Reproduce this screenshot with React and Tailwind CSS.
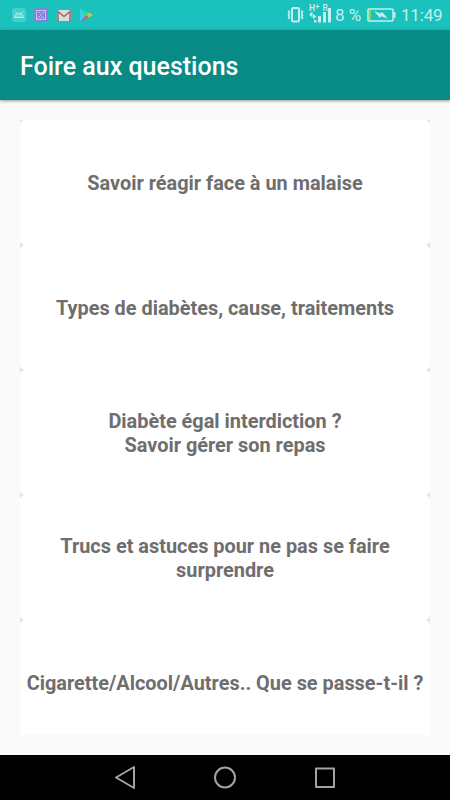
import React from 'react';

const questions = [
  ['Savoir réagir face à un malaise'],
  ['Types de diabètes, cause, traitements'],
  ['Diabète égal interdiction ?', 'Savoir gérer son repas'],
  ['Trucs et astuces pour ne pas se faire', 'surprendre'],
  ['Cigarette/Alcool/Autres.. Que se passe-t-il ?'],
];

function NotificationIcons() {
  return (
    <svg width="96" height="30" viewBox="0 0 96 30">
      {/* android */}
      <rect x="12" y="8" width="14" height="14" rx="3" fill="#45cfcb" />
      <path d="M14.500 17.500c.3-3 2-4.200 4.500-4.200s4.200 1.200 4.500 4.200z" fill="#6fdbd7" stroke="#b4efec" strokeWidth="1" />
      <path d="M15.500 11.700l1.200 2M22.500 11.700l-1.200 2" stroke="#b4efec" strokeWidth="1" />
      {/* screenshot */}
      <rect x="34" y="8" width="14" height="14" rx="2.500" fill="#8a7fd8" />
      <rect x="36.500" y="10.500" width="9" height="9" fill="none" stroke="#b9c4ee" strokeWidth="1" />
      <path d="M37 19l7.500-7.500M38.500 12.500h2M40.500 18.500l2-2 2 2" fill="none" stroke="#b9c4ee" strokeWidth="1" />
      {/* mail */}
      <rect x="57" y="10" width="14" height="11" rx="1" fill="#d0e3df" />
      <path d="M58 21V11.500l6 5 6-5V21" fill="none" stroke="#b0685f" strokeWidth="1.600" />
      {/* play store */}
      <path d="M80 8v14l7-7z" fill="#35cfe8" />
      <path d="M80 8l9.500 5-2.500 2.500z" fill="#28d98d" />
      <path d="M80 22l9.500-5-2.500-2.500z" fill="#d85c6c" />
      <path d="M89 12.500l4 2.500-4 2.500-2.500-2.500z" fill="#c9c935" />
    </svg>
  );
}

function VibrateIcon() {
  return (
    <svg width="17" height="30" viewBox="0 0 17 30" fill="none" stroke="#c3efed">
      <rect x="5" y="8" width="7" height="13.500" rx="1" strokeWidth="2" />
      <path d="M2.500 10.500l-1 1.500 1 1.500-1 1.500 1 1.500-1 1.500 1 1M14.500 10.500l1 1.500-1 1.500 1 1.500-1 1.500 1 1.500-1 1" strokeWidth="1.600" />
    </svg>
  );
}

function SignalIcon() {
  return (
    <svg width="24" height="30" viewBox="0 0 24 30" fill="#c3efed">
      <text x="0" y="10.500" fontSize="8.500" fontWeight="700" fontFamily="Roboto, sans-serif">H</text>
      <path d="M6.500 6.500h4M8.500 4.500v4" stroke="#c3efed" strokeWidth="1.200" />
      <text x="13.500" y="10.500" fontSize="8.500" fontWeight="500" fontFamily="Roboto, sans-serif">R</text>
      <path d="M0 14.500l3.500-3v6zM7.500 16.500l-3.500-2.500v5z" />
      <path d="M5 20h2.500v2.500H5zM9 16h3v6.500H9zM14 12h3v10.500h-3zM19 8h3v14.500h-3z" />
    </svg>
  );
}

function BatteryIcon() {
  return (
    <svg width="29" height="30" viewBox="0 0 29 30">
      <rect x="1" y="9" width="25" height="12" rx="1" fill="none" stroke="#c3efed" strokeWidth="1.600" />
      <rect x="27" y="12" width="1.500" height="6" fill="#c3efed" />
      <rect x="2" y="10" width="2.200" height="10" fill="#77dd3e" />
      <path d="M7 11l6.500 2.500L15 11.800l6 7-6.500-2.600-1.700 1.600z" fill="#c3efed" />
    </svg>
  );
}

function StatusBar() {
  return (
    <div className="flex h-[30px] justify-between bg-[#1bc1bd] text-[17px] leading-[31px] text-[#c3efed]">
      <NotificationIcons />
      <div className="flex pr-2">
        <VibrateIcon />
        <div className="ml-[5px] w-[26px]">
          <SignalIcon />
        </div>
        <span className="w-8 whitespace-nowrap">8 %</span>
        <BatteryIcon />
        <span className="ml-[5px] w-[41px] tracking-[-0.2px] whitespace-nowrap">11:49</span>
      </div>
    </div>
  );
}

function QuestionCard({ lines }) {
  return (
    <div className="flex h-[125px] shrink-0 flex-col items-center justify-center rounded-[5px] bg-white pt-0.5 text-center text-[19.9px] leading-6 font-bold whitespace-nowrap text-[#6e6e6e]">
      {lines.map((line) => (
        <p key={line}>{line}</p>
      ))}
    </div>
  );
}

function NavigationBar() {
  return (
    <div className="flex h-[45px] items-center justify-center bg-black">
      <svg width="240" height="45" viewBox="0 0 240 45" fill="none" stroke="#a3a3a3" strokeWidth="2" strokeLinejoin="round">
        <path d="M11 22.500L29 12v21z" />
        <circle cx="120" cy="22.500" r="10" />
        <rect x="211" y="13.500" width="18" height="18.500" />
      </svg>
    </div>
  );
}

export default function App() {
  return (
    <div className="flex h-[800px] w-[450px] flex-col overflow-hidden bg-[#fafafa] font-[Roboto,sans-serif]">
      <StatusBar />
      <header className="z-10 flex h-[70px] items-center bg-[#088b85] px-5 pt-[3px] shadow-[0_1px_3px_rgba(0,0,0,0.4)]">
        <h1 className="text-[25px] font-medium text-white">Foire aux questions</h1>
      </header>
      <main className="flex-1 p-5">
        <div className="flex h-[615px] flex-col overflow-hidden bg-[linear-gradient(to_bottom,#e2e2e2_505px,#fff_505px)]">
          {questions.map((lines) => (
            <QuestionCard key={lines[0]} lines={lines} />
          ))}
        </div>
      </main>
      <NavigationBar />
    </div>
  );
}
